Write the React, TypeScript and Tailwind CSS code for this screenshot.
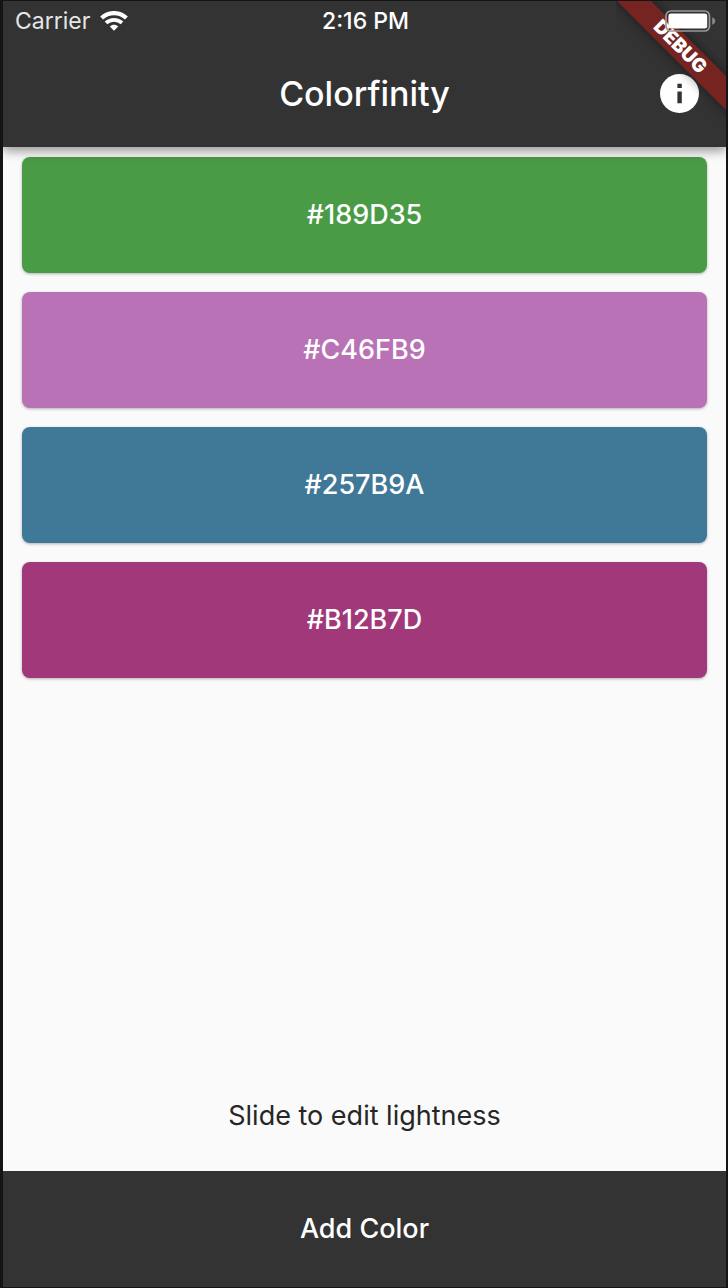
const swatches = [
  { hex: "#189D35", tone: "bg-[#4a9b46]" },
  { hex: "#C46FB9", tone: "bg-[#b872b5]" },
  { hex: "#257B9A", tone: "bg-[#407998]" },
  { hex: "#B12B7D", tone: "bg-[#a13879]" },
];

function WifiIcon() {
  return (
    <svg width="28" height="20" viewBox="0 0 28 20" fill="none" aria-hidden="true">
      <path d="M1.6 7.1C8.6 .4 19.4 .4 26.4 7.1" stroke="white" strokeWidth="4.2" />
      <path d="M6 11.9C10.6 7.8 17.4 7.8 22 11.9" stroke="white" strokeWidth="3.8" />
      <path d="M9.8 15.4C12.2 13.2 15.8 13.2 18.2 15.4L14 19.8Z" fill="white" />
    </svg>
  );
}

function BatteryIcon() {
  return (
    <svg width="51" height="22" viewBox="0 0 51 22" fill="none" aria-hidden="true">
      <rect x="1" y="1" width="43.5" height="20" rx="5" stroke="#999999" strokeWidth="1.7" />
      <rect x="3.4" y="3.4" width="38.8" height="15.2" rx="2.4" fill="white" />
      <path d="M47.2 7.3C51.3 8.7 51.3 13.3 47.2 14.7Z" fill="#888888" />
    </svg>
  );
}

function InfoIcon() {
  return (
    <svg width="40" height="40" viewBox="0 0 40 40" aria-hidden="true">
      <circle cx="19.5" cy="19.5" r="19.5" fill="white" />
      <path d="M17.4 9.8h4.4v4.2h-4.4zM17.4 17.4h4.4v11.8h-4.4z" fill="#333333" />
    </svg>
  );
}

export default function App() {
  return (
    <div className="flex min-h-screen bg-[#141414] pt-px pr-0.5 pb-px pl-[3px] font-['Inter','Liberation_Sans',sans-serif]">
      <div className="relative flex flex-1 flex-col overflow-hidden bg-[#fafafa]">
        <header className="relative z-10 bg-[#333333] text-white shadow-[0_4px_10px_rgba(0,0,0,0.4)]">
          <div className="grid h-10 grid-cols-3 items-center pr-2.5 pl-3 text-[23px] leading-7">
            <div className="flex items-center gap-2.5 text-[#e6e6e6]">
              <span>Carrier</span>
              <WifiIcon />
            </div>
            <span className="text-center font-medium">2:16 PM</span>
            <div className="relative z-20 flex justify-end">
              <BatteryIcon />
            </div>
          </div>
          <div className="grid h-[106px] grid-cols-[1fr_auto_1fr] items-center px-[26px]">
            <h1 className="col-start-2 text-[34px] leading-10 font-medium">Colorfinity</h1>
            <button type="button" aria-label="Info" className="justify-self-end">
              <InfoIcon />
            </button>
          </div>
          <div className="pointer-events-none absolute top-0 right-0 z-10 h-32 w-[110px] overflow-hidden">
            <div className="absolute top-[34px] -left-[26px] flex h-6 w-[180px] rotate-45 items-center justify-center bg-[#762422] text-[19px] leading-6 font-black shadow-[0_0_12px_rgba(0,0,0,0.5)]">
              DEBUG
            </div>
          </div>
        </header>
        <main className="flex flex-1 flex-col">
          <ul className="flex flex-col gap-[19px] px-[19px] pt-2.5">
            {swatches.map(({ hex, tone }) => (
              <li key={hex} className="flex">
                <button
                  type="button"
                  className={`h-[116px] flex-1 rounded-lg text-[27px] leading-8 font-medium text-white shadow-[0_1px_3px_rgba(0,0,0,0.3)] ${tone}`}
                >
                  {hex}
                </button>
              </li>
            ))}
          </ul>
          <p className="mt-auto pb-[39px] text-center text-[27px] leading-8 text-[#262626]">
            Slide to edit lightness
          </p>
        </main>
        <button
          type="button"
          className="h-[116px] bg-[#333333] text-[27px] leading-8 font-medium text-white"
        >
          Add Color
        </button>
      </div>
    </div>
  );
}
